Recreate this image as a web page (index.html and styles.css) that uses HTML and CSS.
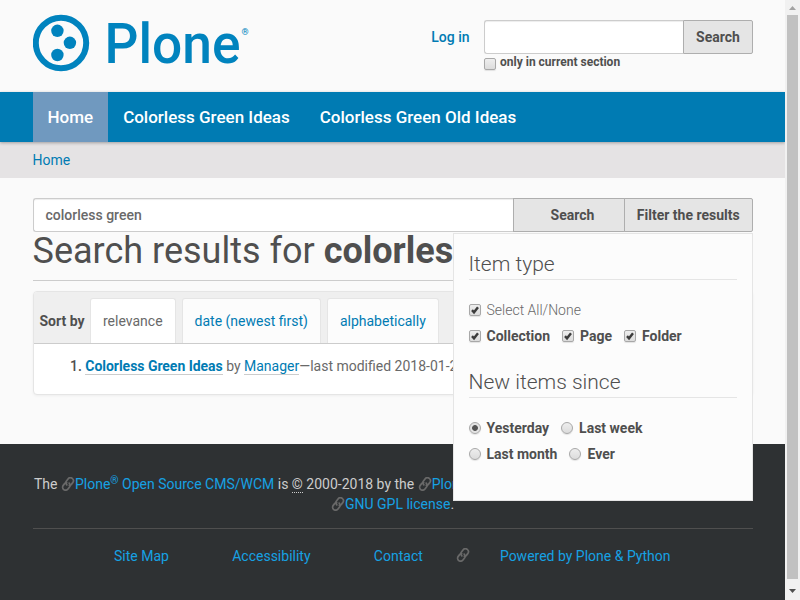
FILE: index.html
```html
<!DOCTYPE html>
<html lang="en">
<head>
<meta charset="utf-8">
<title>Search results</title>
<link rel="stylesheet" href="styles.css">
</head>
<body>
<svg class="defs" width="0" height="0">
  <symbol id="link" viewBox="0 0 14 14"><g transform="rotate(-52 7 7)" fill="none" stroke="currentColor" stroke-width="1.700" stroke-linecap="round"><path d="M8.400 7.400C8 9.300 7 10.100 5.500 10.100H3a3 3 0 0 1 0-6H5.200c1 0 1.700.4 2.100 1"/><path d="M5.600 6.600C6 4.700 7 3.900 8.500 3.900H11a3 3 0 0 1 0 6H8.800c-1 0-1.700-.4-2.100-1"/></g></symbol>
  <symbol id="check" viewBox="0 0 12 12"><path d="M3 6.200 5 8.300 9 3.200" fill="none" stroke="#3c3c3c" stroke-width="2.400"/></symbol>
</svg>
<div class="window">
<div class="page">
  <header class="header">
    <svg class="logo" width="224" height="72" viewBox="0 0 224 72">
      <circle cx="28" cy="31" r="25.200" fill="none" stroke="#0083be" stroke-width="6"/>
      <circle cx="24.400" cy="18.800" r="6.200"/><circle cx="36.900" cy="30.800" r="6.200"/><circle cx="24.400" cy="43" r="6.200"/>
      <text class="word" x="71.500" y="50.500" textLength="136" lengthAdjust="spacingAndGlyphs">Plone</text>
      <text class="reg" x="208.500" y="23">®</text>
    </svg>
    <a class="login">Log in</a>
    <form class="quick">
      <div class="group"><span class="field quick-field"></span><span class="btn quick-btn">Search</span></div>
      <label class="section"><i class="box"></i>only in current section</label>
    </form>
  </header>
  <nav class="nav"><a class="current">Home</a><a>Colorless Green Ideas</a><a>Colorless Green Old Ideas</a></nav>
  <div class="crumbs"><a>Home</a></div>
  <main class="main">
    <div class="search">
      <div class="group"><span class="field search-field">colorless green</span><span class="btn search-btn">Search</span><span class="btn filter-btn">Filter the results</span></div>
      <div class="filter">
        <h2>Item type</h2>
        <div class="row light"><label><i class="box"><svg><use href="#check"/></svg></i>Select All/None</label></div>
        <div class="row"><label><i class="box"><svg><use href="#check"/></svg></i>Collection</label><label><i class="box"><svg><use href="#check"/></svg></i>Page</label><label><i class="box"><svg><use href="#check"/></svg></i>Folder</label></div>
        <h2 class="since">New items since</h2>
        <div class="row"><label><i class="box radio on"></i>Yesterday</label><label><i class="box radio"></i>Last week</label></div>
        <div class="row"><label><i class="box radio"></i>Last month</label><label><i class="box radio"></i>Ever</label></div>
      </div>
    </div>
    <h1>Search results for <strong>colorless green</strong></h1>
    <section class="results">
      <div class="sort"><span class="sort-label">Sort by</span><a class="tab active">relevance</a><a class="tab">date (newest first)</a><a class="tab">alphabetically</a></div>
      <p class="result"><b class="num">1.</b><a class="title">Colorless Green Ideas</a> by <a>Manager</a>—last modified 2018-01-23</p>
    </section>
  </main>
  <footer class="footer">
    <div class="legal"><p class="line">The <svg class="chain"><use href="#link"/></svg><a>Plone<sup>®</sup> Open Source CMS/WCM</a> is <abbr>©</abbr> 2000-2018 by the <svg class="chain"><use href="#link"/></svg><a>Plone Foundation</a> and friends.</p>
    <p class="line second"><svg class="chain"><use href="#link"/></svg><a>GNU GPL license</a>.</p></div>
    <div class="links"><a>Site Map</a><a>Accessibility</a><a>Contact</a><svg class="chain"><use href="#link"/></svg><a class="powered">Powered by Plone &amp; Python</a></div>
  </footer>
</div>
<div class="scrollbar"><svg width="15" height="15"><path d="M4 10h7L7.500 6z" fill="#a3a3a3"/></svg><div class="thumb"></div><svg width="15" height="21"><path d="M4 10h7L7.500 14z" fill="#505050"/></svg></div>
</div>
</body>
</html>
```
FILE: styles.css
```css
* { box-sizing: border-box; }
body { margin: 0; height: 600px; overflow: hidden; background: #fafafa; color: #696969; font: 400 14px/20px Roboto, "Liberation Sans", sans-serif; }
h1, h2, p { margin: 0; }
a { color: #007bb3; text-decoration: none; }
.defs { position: absolute; }
.window { display: flex; height: 600px; }
.page { width: 785px; display: flex; flex-direction: column; overflow: hidden; }

.header { height: 92px; flex: none; display: flex; align-items: flex-start; padding: 12px 32.5px 0 32.5px; }
.logo { fill: #0083be; flex: none; }
.word { font: 500 56px Roboto, sans-serif; }
.reg { font: 500 9px Roboto, sans-serif; }
.login { margin: 15px 0 0 auto; font-weight: 500; }
.quick { width: 269px; margin: 8px 0 0 14px; }
.group { display: flex; }
.field, .btn { height: 34px; line-height: 32px; border: 1px solid #ccc; padding: 0 12px; font-weight: 500; white-space: nowrap; }
.field { background: #fff; border-right: 0; border-radius: 3px 0 0 3px; box-shadow: inset 0 1px 1px rgba(0,0,0,.075); }
.btn { background: #e5e5e5; border-color: #aeaeae; color: #4f4f4f; font-weight: 700; text-align: center; padding: 0; }
.btn:last-child { border-radius: 0 2px 2px 0; }
.quick-field { width: 199px; }
.quick-btn { width: 70px; padding-left: 1px; }
.section { display: flex; gap: 4.5px; font-size: 12px; line-height: 16px; font-weight: 700; color: #4f4f4f; }
.section .box { margin-top: 4px; }

.box { width: 12px; height: 12px; flex: none; border: 1px solid #a8a8a8; border-radius: 2px; background: linear-gradient(#eee, #dcdcdc); box-shadow: 0 1px 1px rgba(0,0,0,.1); }
.box svg { display: block; width: 12px; height: 12px; margin: -1px; }
.radio { border-radius: 50%; }
.on { background: radial-gradient(circle, #555 0 2.500px, #e4e4e4 3.300px); }

.nav { height: 50px; flex: none; display: flex; padding-left: 32.5px; background: #007bb3; box-shadow: 0 1px 3px rgba(0,0,0,.3); position: relative; }
.nav a { padding: 0 15px; color: #fff; font-size: 17px; font-weight: 500; line-height: 50px; }
.nav .current { background: #7099bf; }
.crumbs { height: 36px; flex: none; padding: 8px 32.5px; background: #e5e3e4; }

.main { height: 266px; flex: none; padding: 20px 32.5px 0 32.5px; }
.search { position: relative; }
.search-field { width: 480.5px; }
.search-btn { width: 112px; padding-left: 7px; }
.filter-btn { width: 128.5px; margin-left: -1px; }
.filter { position: absolute; right: 0; top: 35px; width: 300px; height: 268px; padding: 15px; background: #fcfcfc; border: 1px solid #e5e5e5; z-index: 2; color: #4f4f4f; }
h2 { height: 31px; border-bottom: 1px solid #e5e5e5; font-size: 21px; line-height: 30px; font-weight: 300; margin-bottom: 17px; }
.since { margin-top: 18px; }
.row { height: 26px; display: flex; gap: 12px; line-height: 26px; font-weight: 700; }
.row label { display: flex; align-items: center; gap: 6px; }
.light { font-weight: 300; color: #696969; }
h1 { height: 49px; border-bottom: 1px solid #ccc; font-size: 36px; font-weight: 400; line-height: 39px; color: #4f4f4f; white-space: nowrap; }

.results { height: 104px; margin-top: 10px; border: 1px solid #e5e5e5; border-radius: 4px; background: #fff; box-shadow: 0 1px 3px rgba(0,0,0,.05); overflow: hidden; }
.sort { height: 52px; display: flex; align-items: flex-end; padding-left: 6px; background: #efefef; border-bottom: 1px solid #ccc; }
.sort-label { width: 50.5px; line-height: 43px; font-weight: 700; color: #4f4f4f; }
.tab { height: 45px; margin-right: 6px; padding: 0 12px; line-height: 44px; border: 1px solid #e5e5e5; border-bottom: 0; border-radius: 3px 3px 0 0; background: #fcfcfc; }
.active { background: #fff; color: #696969; }
.result { padding: 12px 0 0 36.5px; white-space: nowrap; }
.num { margin-right: 3.5px; color: #4f4f4f; font-weight: 500; }
.result a { border-bottom: 1px solid #ccc; }
.result .title { font-weight: 700; letter-spacing: -.04px; }

.footer { flex: 1; padding: 30px 32.5px 0 32.5px; background: #2e3133; color: #ccc; }
.footer a { color: #16a1e3; }
.legal { height: 55px; border-bottom: 1px solid #4f4f4f; }
.line { padding-left: 1.5px; white-space: nowrap; }
.second { padding-left: 298.5px; }
sup { font-size: 10.500px; line-height: 0; vertical-align: 5px; }
abbr { border-bottom: 1px dotted #ccc; }
.chain { width: 14px; height: 14px; color: #696969; vertical-align: -2px; overflow: visible; }
.links { display: flex; align-items: center; height: 20px; margin-top: 17px; padding-left: 81.5px; gap: 63.3px; }
.links .chain { margin-left: -30.5px; margin-top: -2px; }
.links .powered { margin-left: -33px; }

.scrollbar { width: 15px; display: flex; flex-direction: column; background: #f1f1f1; }
.scrollbar svg { display: block; flex: none; }
.thumb { flex: 1; margin: 0 2px; background: #c1c1c1; }
```
